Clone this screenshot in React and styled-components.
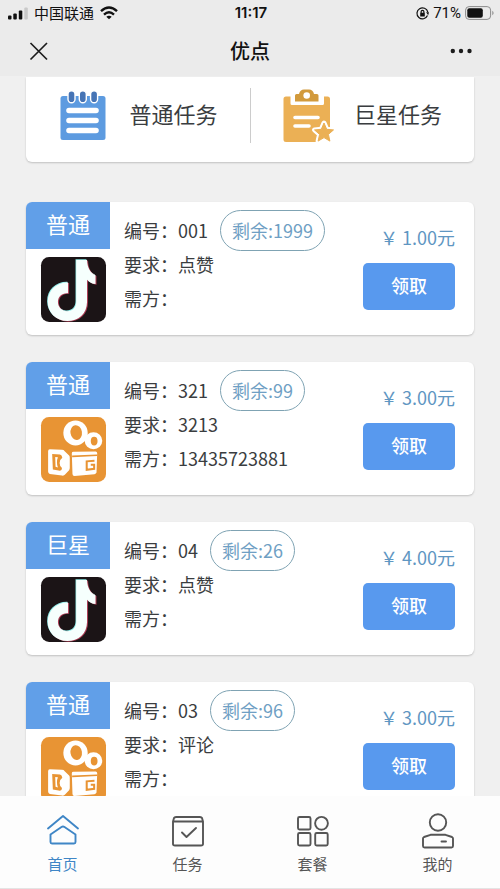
import styled, { createGlobalStyle } from "styled-components";

const GlobalStyle = createGlobalStyle`
  * {
    box-sizing: border-box;
  }

  body {
    margin: 0;
    background-color: #f0f0f0;
    color: #3a3d40;
    font-family: "Noto Sans CJK SC", "Liberation Sans", sans-serif;
    font-size: 18px;
  }
`;

const Page = styled.div`
  display: flex;
  flex-direction: column;
  height: 100vh;
`;

const Header = styled.header`
  flex: none;
  background-color: #ebebeb;
  color: #111;
`;

const StatusBar = styled.div`
  display: grid;
  grid-template-columns: 1fr auto 1fr;
  align-items: center;
  height: 26px;
  padding: 0 6px 0 8px;
  font-size: 15px;
  line-height: 26px;
`;

const StatusGroup = styled.div`
  display: flex;
  align-items: center;
  justify-content: ${(props) => (props.$end ? "flex-end" : "flex-start")};
  gap: ${(props) => (props.$end ? 4 : 6)}px;
  font-family: ${(props) => (props.$end ? "Roboto, sans-serif" : "inherit")};
`;

const Clock = styled.time`
  font-family: Inter, sans-serif;
  font-weight: 600;
`;

const TitleBar = styled.div`
  display: grid;
  grid-template-columns: 1fr auto 1fr;
  align-items: center;
  height: 50px;
  padding: 0 24px;
`;

const Title = styled.h1`
  margin: 0;
  font-size: 20px;
  font-weight: 500;
  line-height: 28px;
`;

const IconButton = styled.button`
  display: flex;
  justify-self: ${(props) => props.$side};
  padding: 4px;
  border: 0;
  background: none;
  color: inherit;
  cursor: pointer;
`;

const Content = styled.main`
  flex: 1;
  min-height: 0;
  padding: 1px 26px 0;
  overflow-y: auto;
  scrollbar-width: none;
`;

const Categories = styled.nav`
  display: grid;
  grid-template-columns: 1fr 1fr;
  padding: 11px 0 19px;
  margin-bottom: 40px;
  border-radius: 0 0 6px 6px;
  background-color: #fff;
  box-shadow: 0 1px 2px rgba(0, 0, 0, 0.2);
`;

const Category = styled.a`
  display: flex;
  align-items: center;
  justify-content: center;
  gap: 21px;
  height: 55px;
  color: inherit;
  font-size: 22px;
  text-decoration: none;

  & + & {
    border-left: 1px solid #ccc;
  }
`;

const CategoryName = styled.span`
  padding-bottom: 6px;
`;

const TaskList = styled.ul`
  display: flex;
  flex-direction: column;
  gap: 27px;
  margin: 0;
  padding: 0 0 27px;
  list-style: none;
`;

const TaskCard = styled.li`
  display: flex;
  flex: none;
  height: 133px;
  border-radius: 6px;
  background-color: #fff;
  box-shadow: 0 1px 2px rgba(0, 0, 0, 0.2);
  overflow: hidden;
`;

const Source = styled.div`
  display: flex;
  flex: none;
  flex-direction: column;
  align-items: flex-end;
  gap: 8px;
  width: 84px;
`;

const Kind = styled.div`
  align-self: stretch;
  padding-bottom: 4px;
  background-color: #619fe8;
  color: #fff;
  font-size: 22px;
  line-height: 43px;
  text-align: center;
`;

const Logo = styled.div`
  padding-right: 4px;
`;

const Details = styled.div`
  flex: 1;
  min-width: 0;
  padding: 11px 0 0 14px;
`;

const Detail = styled.div`
  display: flex;
  align-items: center;
  height: 34px;
  white-space: nowrap;
`;

const Remaining = styled.span`
  margin-left: 12px;
  padding: 0 11px;
  border: 1px solid #7fa3b3;
  border-radius: 21px;
  color: #6f9fc4;
  line-height: 39px;
`;

const Action = styled.div`
  display: flex;
  flex: none;
  flex-direction: column;
  align-items: flex-end;
  gap: 11px;
  padding: 20px 19px 0 0;
`;

const Price = styled.div`
  color: #5f96c2;
  line-height: 30px;
  white-space: nowrap;
`;

const ClaimButton = styled.button`
  width: 92px;
  height: 47px;
  padding: 0 0 4px;
  border: 0;
  border-radius: 5px;
  background-color: #5899ee;
  color: #fff;
  font: inherit;
  font-weight: 500;
  cursor: pointer;
`;

const TabBar = styled.nav`
  display: grid;
  flex: none;
  grid-template-columns: repeat(4, 1fr);
  height: 93px;
  padding-top: 17px;
  border-bottom: 1px solid #e4e4e4;
  background-color: #fdfdfd;
`;

const Tab = styled.a`
  display: flex;
  flex-direction: column;
  align-items: center;
  gap: 4px;
  color: ${(props) => (props.$active ? "#3f86c6" : "#555")};
  font-size: 15px;
  line-height: 22px;
  text-decoration: none;
`;

const Svg = styled.svg`
  display: block;
  flex: none;
  overflow: visible;
`;

const SignalIcon = () => (
  <Svg width="20" height="13" viewBox="0 0 20 13" fill="#111" aria-hidden="true">
    <rect x="0" y="8.500" width="3.500" height="4" rx="1" />
    <rect x="5.300" y="6.500" width="3.500" height="6" rx="1" />
    <rect x="10.800" y="3.500" width="3.500" height="9" rx="1" />
    <rect x="16.300" y="0.500" width="3.500" height="12" rx="1" fill="#c9c9c9" />
  </Svg>
);

const WifiIcon = () => (
  <Svg width="18" height="14" viewBox="0 0 18 14" fill="none" stroke="#111" strokeWidth="2.400" aria-hidden="true">
    <path d="M1 5.200Q9 -2.200 17 5.200" />
    <path d="M4 8.600Q9 4 14 8.600" />
    <path d="M9 13.300 6.300 10.700Q9 8.600 11.700 10.700Z" fill="#111" stroke="none" />
  </Svg>
);

const RotationLockIcon = () => (
  <Svg width="13" height="13" viewBox="0 0 13 13" fill="none" stroke="#111" strokeWidth="1.200" aria-hidden="true">
    <path d="M11.800 5A5.500 5.500 0 1 0 11.500 8.600" />
    <path d="M10.100 5.200H13L12.200 8.200Z" fill="#111" stroke="none" />
    <rect x="4.200" y="5.800" width="4.600" height="3.800" rx=".6" fill="#111" stroke="none" />
    <path d="M5.100 6V4.800a1.400 1.400 0 0 1 2.800 0V6" />
  </Svg>
);

const BatteryIcon = () => (
  <Svg width="29" height="14" viewBox="0 0 29 14" aria-hidden="true">
    <rect x=".6" y=".6" width="25" height="12.800" rx="3.500" fill="none" stroke="#8b8b8b" />
    <rect x="2.300" y="2.300" width="15.500" height="9.400" rx="2" fill="#111" />
    <path d="M27.300 4.700v4.600q1.300-.8 1.300-2.300t-1.300-2.300Z" fill="#8b8b8b" />
  </Svg>
);

const CloseIcon = () => (
  <Svg width="22" height="22" viewBox="0 0 22 22" stroke="#1c1c1c" strokeWidth="1.700" aria-hidden="true">
    <path d="M2.500 3 19 19.500M19 3 2.500 19.500" />
  </Svg>
);

const MoreIcon = () => (
  <Svg width="22" height="8" viewBox="0 0 22 8" fill="#1c1c1c" aria-hidden="true">
    <circle cx="2.800" cy="4" r="2.200" />
    <circle cx="11" cy="4" r="2.200" />
    <circle cx="19.500" cy="4" r="2.200" />
  </Svg>
);

const NotepadIcon = () => (
  <Svg width="50" height="54" viewBox="0 0 50 54" aria-hidden="true">
    <rect x="2.500" y="7" width="45" height="44" rx="2.500" fill="#5d9be0" />
    <g fill="#4674b5" stroke="#fff" strokeWidth="1.400">
      <rect x="10" y="1.800" width="7" height="12" rx="3.500" />
      <rect x="21.300" y="1.800" width="7" height="12" rx="3.500" />
      <rect x="32.600" y="1.800" width="7" height="12" rx="3.500" />
    </g>
    <path d="M11 21.500H38M11 31.500H38M11 41.500H38" stroke="#fff" strokeWidth="5.600" strokeLinecap="round" />
  </Svg>
);

const starPath =
  "M41 34 43.700 40.300 50.500 40.900 45.400 45.400 46.900 52.100 41 48.600 35.100 52.100 36.600 45.400 31.500 40.900 38.300 40.300Z";

const ClipboardStarIcon = () => (
  <Svg width="50" height="54" viewBox="0 0 50 54" aria-hidden="true">
    <path
      d="M3 7.500H7.500V14.500Q7.500 16 9 16H39.500Q41 16 41 14.500V7.500H44.500Q47 7.500 47 10V50.500Q47 53 44.500 53H3Q.5 53 .5 50.500V10Q.5 7.500 3 7.500Z"
      fill="#ebb055"
    />
    <path d="M12 12.500V6.500Q12 5 13.500 5H16Q17 .5 21 .5H26Q30 .5 31 5H34Q35.500 5 35.500 6.500V12.500Z" fill="#d29a3c" />
    <circle cx="23.700" cy="6.500" r="3.300" fill="#fff" />
    <path d="M12 28.500H35M12 37H26" stroke="#fff" strokeWidth="3.600" strokeLinecap="round" />
    <path d={starPath} fill="#fff" stroke="#fff" strokeWidth="5" strokeLinejoin="round" />
    <path d="M34 49H49V56H34Z" fill="#fff" />
    <path d={starPath} fill="#ebb055" stroke="#ebb055" strokeWidth="1" strokeLinejoin="round" />
  </Svg>
);

const notePath =
  "M104 9H136C137 32 146 48 161 54V80C150 79 143 75 136 67V132C136 168 110 189 78 189C44 189 20 164 20 132C20 98 46 74 80 75V107C62 105 50 117 50 133C50 148 62 160 77 160C94 160 104 149 104 132Z";

const DouyinLogo = () => (
  <Svg width="65" height="65" viewBox="0 0 192 192" role="img" aria-label="抖音">
    <rect width="192" height="192" rx="24" fill="#1b1416" />
    <path d={notePath} transform="translate(-2 -2)" fill="#8fe9e6" />
    <path d={notePath} transform="translate(3 2)" fill="#a83a52" />
    <path d={notePath} fill="#f6fffd" />
  </Svg>
);

const KuaishouLogo = () => (
  <Svg width="65" height="65" viewBox="0 0 192 192" role="img" aria-label="快手">
    <rect width="192" height="192" rx="24" fill="#e89434" />
    <g fill="#fff">
      <ellipse cx="102" cy="47" rx="36" ry="37" />
      <ellipse cx="155" cy="70" rx="26" ry="25" />
      <path d="M26 95 62 97Q67 97 70 101L83 114Q85 116 85 120V151Q85 154 83 157L71 170Q68 174 62 173L26 168Q21 167 21 161V101Q21 95 26 95Z" />
      <path d="M91 107Q91 103 96 103L161 102Q166 102 166 107L164 164Q163 168 158 169L99 174Q93 174 93 168Z" />
    </g>
    <g fill="#e89434">
      <ellipse cx="104" cy="46" rx="17" ry="22" transform="rotate(-8 104 46)" />
      <ellipse cx="157" cy="71" rx="10" ry="13" />
      <path d="M33 109 56 111Q62 112 63 120Q55 125 55 136Q55 146 62 151Q62 159 56 159L35 155Z" />
      <path d="m92 114 74-3v4l-74 4Z" />
    </g>
    <path d="M42 118 50 119Q44 134 50 149L43 147Z" fill="#fff" />
    <path d="M158 129 135 131V156L157 153V141H147" fill="none" stroke="#e89434" strokeWidth="6" />
  </Svg>
);

const TabIcon = ({ children }) => (
  <Svg
    width="34"
    height="36"
    viewBox="0 0 34 36"
    fill="none"
    stroke="currentColor"
    strokeWidth="1.900"
    strokeLinejoin="round"
    strokeLinecap="round"
    aria-hidden="true"
  >
    {children}
  </Svg>
);

const HomeIcon = () => (
  <TabIcon>
    <path d="M2 15.500 17 3 32 15.500" />
    <path d="M4.500 21.500 15.500 14Q17 13 18.500 14L29.500 21.500V29Q29.500 30.500 28 30.500H6Q4.500 30.500 4.500 29Z" />
  </TabIcon>
);

const TaskIcon = () => (
  <TabIcon>
    <path d="M2 8.500V31Q2 32.500 4 32.500H30Q32 32.500 32 31V8.500L31 5Q30.500 4 29 4H5Q3.500 4 3 5ZM2 8.500H32" />
    <path d="m11 19.500 4.500 4.500L25 15" />
  </TabIcon>
);

const PackageIcon = () => (
  <TabIcon>
    <rect x="2" y="4" width="12.500" height="12.500" rx="1.500" />
    <circle cx="25.500" cy="10.300" r="6.400" />
    <rect x="2" y="20" width="12.500" height="12.500" rx="1.500" />
    <rect x="19.200" y="20" width="12.500" height="12.500" rx="1.500" />
  </TabIcon>
);

const ProfileIcon = () => (
  <TabIcon>
    <circle cx="17" cy="9.500" r="8.200" />
    <path d="M2 25.500Q2 24.500 3 24L9.500 21.800H24.500L31 24Q32 24.500 32 25.500V33Q32 34.500 30.500 34.500H3.500Q2 34.500 2 33ZM20.500 28.500H25" />
  </TabIcon>
);

const tasks = [
  { kind: "普通", Icon: DouyinLogo, number: "001", left: 1999, request: "点赞", owner: "", price: "1.00" },
  { kind: "普通", Icon: KuaishouLogo, number: "321", left: 99, request: "3213", owner: "13435723881", price: "3.00" },
  { kind: "巨星", Icon: DouyinLogo, number: "04", left: 26, request: "点赞", owner: "", price: "4.00" },
  { kind: "普通", Icon: KuaishouLogo, number: "03", left: 96, request: "评论", owner: "", price: "3.00" },
];

const tabs = [
  { label: "首页", href: "#home", Icon: HomeIcon, active: true },
  { label: "任务", href: "#tasks", Icon: TaskIcon },
  { label: "套餐", href: "#packages", Icon: PackageIcon },
  { label: "我的", href: "#profile", Icon: ProfileIcon },
];

function Task({ task }) {
  const { kind, Icon, number, left, request, owner, price } = task;

  return (
    <TaskCard>
      <Source>
        <Kind>{kind}</Kind>
        <Logo>
          <Icon />
        </Logo>
      </Source>
      <Details>
        <Detail>
          编号：{number}
          <Remaining>剩余:{left}</Remaining>
        </Detail>
        <Detail>要求：{request}</Detail>
        <Detail>需方：{owner}</Detail>
      </Details>
      <Action>
        <Price>￥ {price}元</Price>
        <ClaimButton type="button">领取</ClaimButton>
      </Action>
    </TaskCard>
  );
}

export default function App() {
  return (
    <Page>
      <GlobalStyle />
      <Header>
        <StatusBar>
          <StatusGroup>
            <SignalIcon />
            <span>中国联通</span>
            <WifiIcon />
          </StatusGroup>
          <Clock>11:17</Clock>
          <StatusGroup $end>
            <RotationLockIcon />
            <span>71%</span>
            <BatteryIcon />
          </StatusGroup>
        </StatusBar>
        <TitleBar>
          <IconButton type="button" aria-label="关闭" $side="start">
            <CloseIcon />
          </IconButton>
          <Title>优点</Title>
          <IconButton type="button" aria-label="更多" $side="end">
            <MoreIcon />
          </IconButton>
        </TitleBar>
      </Header>
      <Content>
        <Categories>
          <Category href="#normal">
            <NotepadIcon />
            <CategoryName>普通任务</CategoryName>
          </Category>
          <Category href="#star">
            <ClipboardStarIcon />
            <CategoryName>巨星任务</CategoryName>
          </Category>
        </Categories>
        <TaskList>
          {tasks.map((task) => (
            <Task key={task.number} task={task} />
          ))}
        </TaskList>
      </Content>
      <TabBar>
        {tabs.map(({ label, href, Icon, active }) => (
          <Tab key={label} href={href} $active={active}>
            <Icon />
            {label}
          </Tab>
        ))}
      </TabBar>
    </Page>
  );
}
